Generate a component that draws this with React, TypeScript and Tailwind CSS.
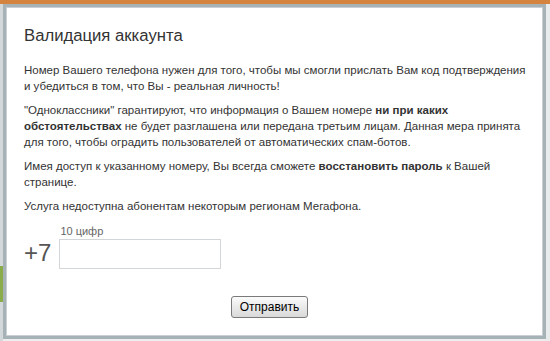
import React from "react";

export default function App() {
  return (
    <div
      className="w-[550px] h-[341px] overflow-hidden bg-[#eceeef] flex flex-col"
      style={{ fontFamily: '"Liberation Sans", Arial, sans-serif' }}
    >
      <div className="h-[4px] bg-[#d4843f] shrink-0" />
      <div className="flex flex-1 min-h-0">
        <div className="w-[3px] flex flex-col bg-[#d3d8da]">
          <div className="h-[262px]" />
          <div className="h-[36px] bg-[#8aac4a]" />
        </div>
        <div className="w-[543px] h-[335px] border-[3px] border-[#a7b2b7] bg-white shadow-[inset_0_0_0_1px_#c8d0d3] flex flex-col pt-[19px] px-[18px]">
          <div className="text-[16.7px] leading-[20px] text-[#333333]">Валидация аккаунта</div>
          <div className="mt-[16px] w-[510px] text-[11.5px] leading-[16px] text-[#333333] flex flex-col gap-[8px] whitespace-nowrap">
            <p>
              Номер Вашего телефона нужен для того, чтобы мы смогли прислать Вам код подтверждения
              <br />и убедиться в том, что Вы - реальная личность!
            </p>
            <p>
              "Одноклассники" гарантируют, что информация о Вашем номере <b>ни при каких</b>
              <br />
              <b>обстоятельствах</b> не будет разглашена или передана третьим лицам. Данная мера принята
              <br />
              для того, чтобы оградить пользователей от автоматических спам-ботов.
            </p>
            <p>
              Имея доступ к указанному номеру, Вы всегда сможете <b>восстановить пароль</b> к Вашей
              <br />
              странице.
            </p>
            <p>Услуга недоступна абонентам некоторым регионам Мегафона.</p>
          </div>
          <div className="mt-[10px] flex items-end gap-[8px]">
            <div className="text-[24px] leading-[28px] text-[#555555] pb-[2px]">+7</div>
            <div className="flex flex-col">
              <div className="text-[11px] leading-[14px] text-[#666666] pl-[1px]">10 цифр</div>
              <div className="mt-[1px] w-[162px] h-[30px] border border-[#d3d6d8] bg-white" />
            </div>
          </div>
          <div className="mt-[27px] pl-[207px] flex">
            <button className="w-[77px] h-[22px] border border-[#7a7a7a] rounded-[3px] bg-gradient-to-b from-[#fbfbfb] to-[#d9d9d9] text-[12px] leading-[20px] text-black">
              Отправить
            </button>
          </div>
        </div>
        <div className="flex-1 bg-[#e9ecec]" />
      </div>
    </div>
  );
}
